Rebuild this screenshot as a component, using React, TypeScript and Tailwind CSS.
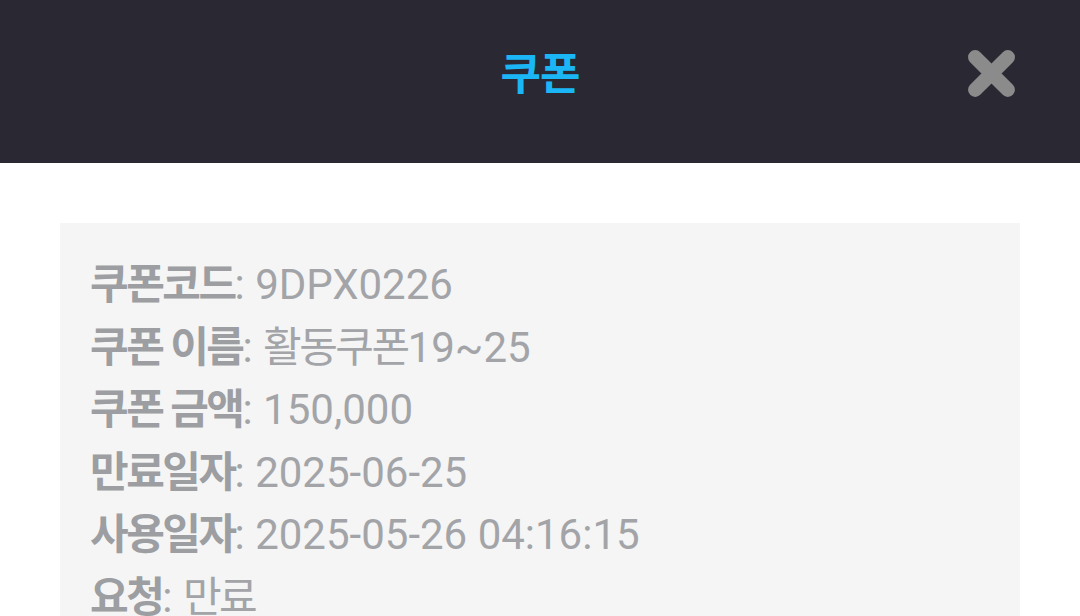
const rows = [
  { label: '쿠폰코드', value: ['', '9DPX0226'] },
  { label: '쿠폰 이름', value: ['활동쿠폰', '19~25'] },
  { label: '쿠폰 금액', value: ['', '150,000'] },
  { label: '만료일자', value: ['', '2025-06-25'] },
  { label: '사용일자', value: ['', '2025-05-26 04:16:15'] },
  { label: '요청', value: ['만료', ''] },
]

function CloseIcon() {
  return (
    <svg viewBox="0 0 50 50" className="w-[51px] h-[51px]">
      <path d="M9 9L41 41M41 9L9 41" stroke="#8b8b8b" strokeWidth="14" strokeLinecap="round" />
    </svg>
  )
}

export default function App() {
  return (
    <div className="w-[1080px] h-[616px] overflow-hidden bg-white font-['Roboto','Noto_Sans_CJK_KR',sans-serif]">
      <header className="h-[163px] bg-[#2a2933]">
        <div className="h-[142px] grid grid-cols-[1fr_auto_1fr] items-center">
          <div />
          <h1 className="text-[44px] font-bold text-[#1ab6f5] leading-none tracking-[-1px] font-['Noto_Sans_CJK_KR',sans-serif]">쿠폰</h1>
          <div className="flex justify-end pr-[63px] pt-[4px]">
            <button className="flex items-center justify-center">
              <CloseIcon />
            </button>
          </div>
        </div>
      </header>

      <main className="pt-[60px] px-[60px]">
        <div className="bg-[#f5f5f5] pt-[31px] pb-[40px] px-[30px]">
          {rows.map((r) => (
            <p key={r.label} className="text-[42px] leading-[62.6px] text-[#a3a4a8] whitespace-nowrap">
              <span className="font-bold text-[#9c9ea2] tracking-[-2.5px]">{r.label}</span>:{' '}
              <span className="tracking-[-2.5px]">{r.value[0]}</span>
              {r.value[1]}
            </p>
          ))}
        </div>
      </main>
    </div>
  )
}
